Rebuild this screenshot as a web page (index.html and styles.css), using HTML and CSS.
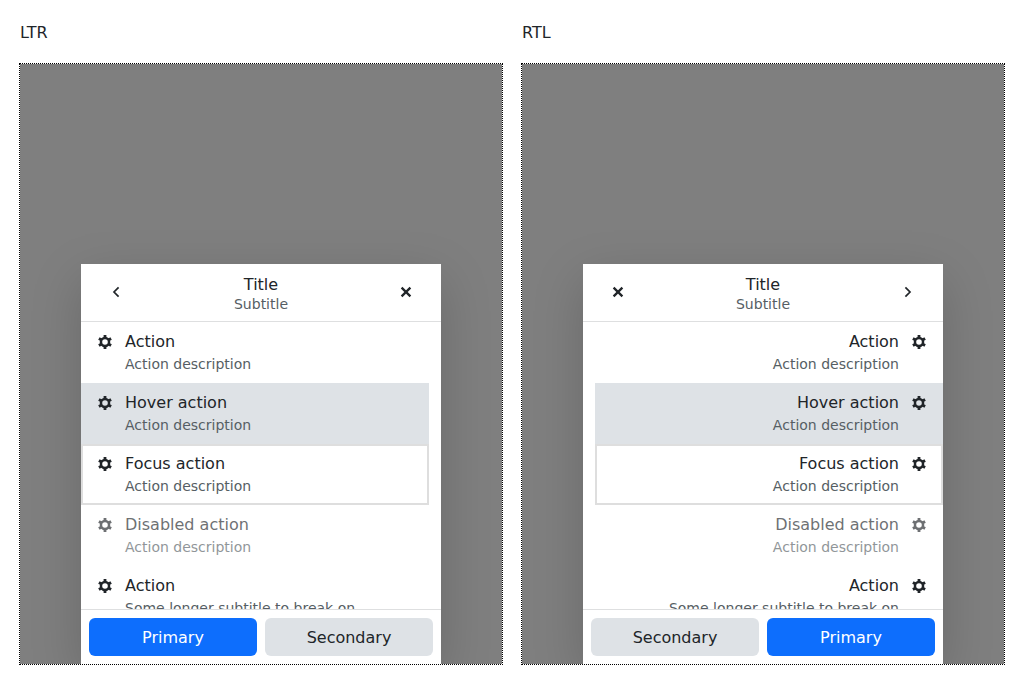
FILE: index.html
```
<!DOCTYPE html>
<html lang="en">
<head>
<meta charset="utf-8">
<title>Action sheet</title>
<link rel="stylesheet" href="styles.css">
</head>
<body>
<svg class="symbols" aria-hidden="true">
  <symbol id="cog" viewBox="0 0 16 16">
    <circle cx="8" cy="8" r="4.05" fill="none" stroke="currentColor" stroke-width="2.5"/>
    <path d="M8 4V1M8 12v3M4.54 6L1.9 4.5M11.46 10l2.64 1.5M11.46 6l2.64-1.5M4.54 10L1.9 11.5" fill="none" stroke="currentColor" stroke-width="2.8"/>
  </symbol>
  <symbol id="back" viewBox="0 0 16 16">
    <path d="M10.6 3.4L6 8l4.6 4.6" fill="none" stroke="currentColor" stroke-width="1.7"/>
  </symbol>
  <symbol id="close" viewBox="0 0 16 16">
    <path d="M3.6 3.6l8.8 8.8M12.4 3.6l-8.8 8.8" fill="none" stroke="currentColor" stroke-width="2.3"/>
  </symbol>
</svg>
<main class="demo">
  <section class="column">
    <p class="label">LTR</p>
    <div class="frame" dir="ltr">
      <div class="sheet">
        <header class="header">
          <button class="icon-button"><svg class="icon back"><use href="#back"/></svg></button>
          <div class="heading"><div class="title">Title</div><div class="subtitle">Subtitle</div></div>
          <button class="icon-button"><svg class="icon"><use href="#close"/></svg></button>
        </header>
        <ul class="list">
          <li class="item"><svg class="icon"><use href="#cog"/></svg><div><div class="name">Action</div><div class="description">Action description</div></div></li>
          <li class="item hover"><svg class="icon"><use href="#cog"/></svg><div><div class="name">Hover action</div><div class="description">Action description</div></div></li>
          <li class="item focus"><svg class="icon"><use href="#cog"/></svg><div><div class="name">Focus action</div><div class="description">Action description</div></div></li>
          <li class="item disabled"><svg class="icon"><use href="#cog"/></svg><div><div class="name">Disabled action</div><div class="description">Action description</div></div></li>
          <li class="item"><svg class="icon"><use href="#cog"/></svg><div><div class="name">Action</div><div class="description">Some longer subtitle to break on</div></div></li>
        </ul>
        <footer class="footer"><button class="button primary">Primary</button><button class="button">Secondary</button></footer>
      </div>
    </div>
  </section>
  <section class="column">
    <p class="label">RTL</p>
    <div class="frame" dir="rtl">
      <div class="sheet">
        <header class="header">
          <button class="icon-button"><svg class="icon back"><use href="#back"/></svg></button>
          <div class="heading"><div class="title">Title</div><div class="subtitle">Subtitle</div></div>
          <button class="icon-button"><svg class="icon"><use href="#close"/></svg></button>
        </header>
        <ul class="list">
          <li class="item"><svg class="icon"><use href="#cog"/></svg><div><div class="name">Action</div><div class="description">Action description</div></div></li>
          <li class="item hover"><svg class="icon"><use href="#cog"/></svg><div><div class="name">Hover action</div><div class="description">Action description</div></div></li>
          <li class="item focus"><svg class="icon"><use href="#cog"/></svg><div><div class="name">Focus action</div><div class="description">Action description</div></div></li>
          <li class="item disabled"><svg class="icon"><use href="#cog"/></svg><div><div class="name">Disabled action</div><div class="description">Action description</div></div></li>
          <li class="item"><svg class="icon"><use href="#cog"/></svg><div><div class="name">Action</div><div class="description">Some longer subtitle to break on</div></div></li>
        </ul>
        <footer class="footer"><button class="button primary">Primary</button><button class="button">Secondary</button></footer>
      </div>
    </div>
  </section>
</main>
</body>
</html>
```

FILE: styles.css
```
* {
  box-sizing: border-box;
}

body {
  margin: 0;
  color: #212529;
  background: #fff;
  font: 16px/24px "DejaVu Sans", sans-serif;
}

.symbols {
  display: none;
}

.demo {
  display: flex;
  gap: 18px;
  padding: 21px 19px 0;
}

.column {
  flex: 0 0 484px;
}

.label {
  margin: 0 1px 18px;
}

.frame {
  display: flex;
  justify-content: center;
  align-items: flex-end;
  height: 602px;
  overflow: hidden;
  border: 1px dotted #000;
  background: #7f7f7f;
  background-clip: padding-box;
}

.sheet {
  display: flex;
  flex-direction: column;
  width: 360px;
  height: 400px;
  background: #fff;
  box-shadow: 0 16px 48px rgba(0, 0, 0, 0.175);
}

.header {
  display: flex;
  align-items: flex-start;
  height: 58px;
  padding: 9px 16px 0;
  border-bottom: 1px solid #dedfe0;
}

.heading {
  flex: 1;
  padding-top: 2px;
  text-align: center;
}

.title {
  line-height: 20px;
}

.subtitle {
  color: #565e64;
  font-size: 14px;
  line-height: 19px;
}

.icon-button {
  display: flex;
  align-items: center;
  justify-content: center;
  width: 38px;
  height: 38px;
  padding: 0;
  border: 0;
  color: inherit;
  background: none;
}

.icon {
  flex: none;
  width: 16px;
  height: 16px;
}

[dir="rtl"] .back {
  transform: scaleX(-1);
}

.list {
  flex: 1;
  min-height: 0;
  margin: 0;
  padding: 0;
  padding-inline-end: 12px;
  overflow: hidden;
  list-style: none;
}

.item {
  display: flex;
  gap: 12px;
  height: 61px;
  padding: 8px 16px;
}

.item .icon {
  margin-top: 4px;
}

.description {
  color: #565e64;
  font-size: 14px;
  line-height: 21px;
}

.hover {
  background: #dee2e6;
}

.focus {
  border: 2px solid #dedede;
  padding: 6px 14px;
}

.disabled {
  opacity: 0.65;
}

.footer {
  display: flex;
  gap: 8px;
  padding: 8px;
  border-top: 1px solid #dedfe0;
}

.button {
  flex: 1;
  height: 38px;
  padding: 2px 0 0;
  border: 0;
  border-radius: 6px;
  color: #212529;
  background: #dee2e6;
  font: inherit;
}

.primary {
  color: #fff;
  background: #0d6efd;
}
```
